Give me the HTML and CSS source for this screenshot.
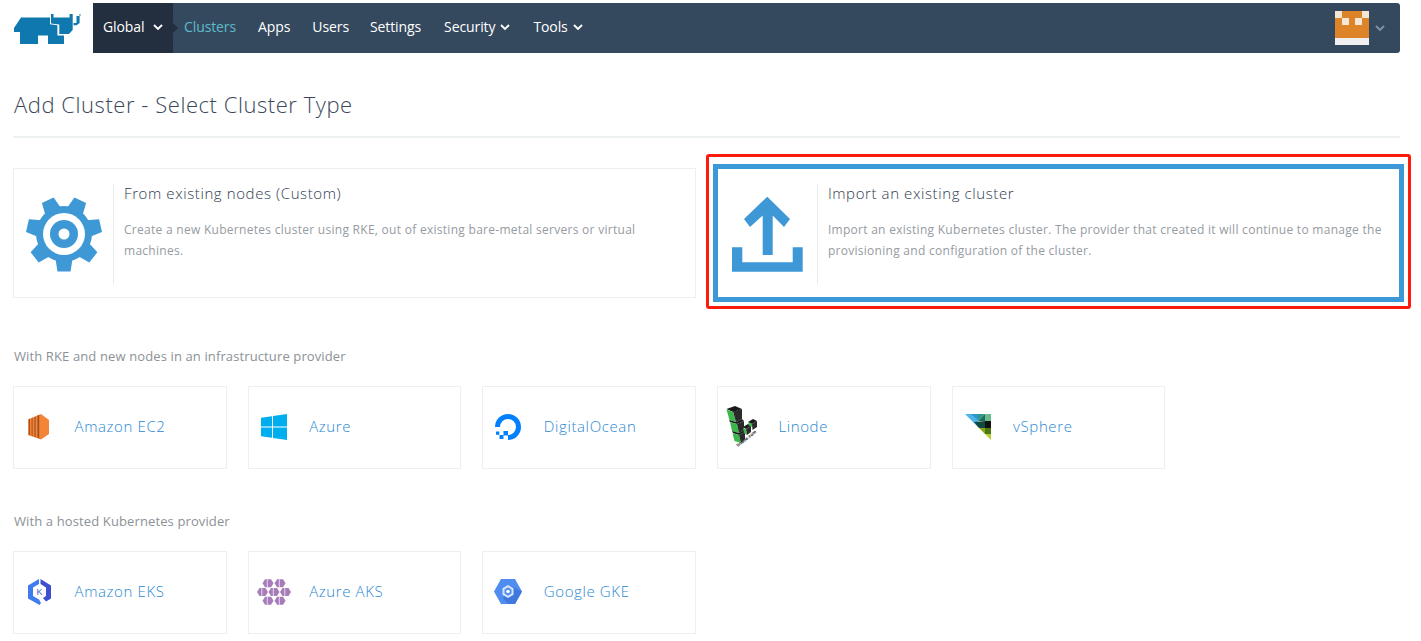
FILE: index.html
```html
<!DOCTYPE html>
<html lang="en">
<head>
<meta charset="utf-8">
<title>Add Cluster - Select Cluster Type</title>
<link rel="stylesheet" href="styles.css">
</head>
<body>
<header class="topbar">
  <a class="brand" href="#" aria-label="Rancher">
    <svg class="brand-logo" viewBox="14 13 68 32" width="68" height="32">
      <path class="logo-fill" d="M14 28 21 17.500H50V24.300L57.400 25.300V35.500H64V44H48V35.500H38V44H20V32H14Z"/>
      <path class="logo-fill" d="M51 14H53.500V17.500H69.600V14H72.700V30L69 34H59.300V24.500L51 23.500Z"/>
      <path class="logo-fill" d="M73.500 23H76.500V16H79.600V23L76.500 25.300H73.500Z"/>
      <circle class="logo-mark" cx="80" cy="15" r="1.200"/>
    </svg>
  </a>
  <nav class="nav">
    <a class="nav-scope" href="#">Global
      <svg class="chev chev-lg" viewBox="0 0 10 7"><path d="M1 1 5 5 9 1"/></svg>
    </a>
    <a class="nav-link nav-active link-clusters" href="#">Clusters</a>
    <a class="nav-link link-apps" href="#">Apps</a>
    <a class="nav-link link-users" href="#">Users</a>
    <a class="nav-link link-settings" href="#">Settings</a>
    <a class="nav-link link-security" href="#">Security
      <svg class="chev" viewBox="0 0 10 7"><path d="M1 1 5 5 9 1"/></svg>
    </a>
    <a class="nav-link link-tools" href="#">Tools
      <svg class="chev" viewBox="0 0 10 7"><path d="M1 1 5 5 9 1"/></svg>
    </a>
    <div class="account">
      <svg class="avatar" viewBox="0 0 5 5" width="34" height="34" shape-rendering="crispEdges">
        <rect class="av-o" width="5" height="4"/>
        <rect class="av-w" width="1" height="1"/>
        <rect class="av-w" x="4" width="1" height="1"/>
        <rect class="av-w" x="1" y="1" width="1" height="1"/>
        <rect class="av-w" x="3" y="1" width="1" height="1"/>
        <rect class="av-b" y="4" width="5" height="1"/>
      </svg>
      <svg class="chev chev-muted" viewBox="0 0 10 7"><path d="M1 1 5 5 9 1"/></svg>
    </div>
  </nav>
</header>

<main class="page">
  <h1 class="title">Add Cluster - Select Cluster Type</h1>

  <section class="grid grid-top">
    <a class="card" href="#">
      <span class="card-icon">
        <svg viewBox="-38 -38 76 76" width="76" height="76">
          <g class="blue">
            <circle r="28"/>
            <polygon points="-8.500,-25 -6.500,-37.500 6.500,-37.500 8.500,-25" transform="rotate(180)"/>
            <polygon points="-8.500,-25 -6.500,-37.500 6.500,-37.500 8.500,-25" transform="rotate(231.430)"/>
            <polygon points="-8.500,-25 -6.500,-37.500 6.500,-37.500 8.500,-25" transform="rotate(282.860)"/>
            <polygon points="-8.500,-25 -6.500,-37.500 6.500,-37.500 8.500,-25" transform="rotate(334.290)"/>
            <polygon points="-8.500,-25 -6.500,-37.500 6.500,-37.500 8.500,-25" transform="rotate(25.710)"/>
            <polygon points="-8.500,-25 -6.500,-37.500 6.500,-37.500 8.500,-25" transform="rotate(77.140)"/>
            <polygon points="-8.500,-25 -6.500,-37.500 6.500,-37.500 8.500,-25" transform="rotate(128.570)"/>
          </g>
          <circle class="white" r="21"/>
          <circle class="blue" r="14"/>
          <circle class="white" r="5.500"/>
        </svg>
      </span>
      <span class="card-body">
        <span class="card-title">From existing nodes (Custom)</span>
        <span class="card-desc">Create a new Kubernetes cluster using RKE, out of existing bare-metal servers or virtual machines.</span>
      </span>
    </a>

    <a class="card card-selected" href="#">
      <span class="card-icon">
        <svg viewBox="732 196 71 77" width="71" height="77">
          <path class="blue" d="M767.300 196.700 790 219 784 227 772.700 215.500V255H762.700V215.500L750 227 744 219Z"/>
          <path class="blue" d="M732 247.300H742.300V262.300H792.700V247.300H802.700V271.700H732Z"/>
        </svg>
      </span>
      <span class="card-body">
        <span class="card-title">Import an existing cluster</span>
        <span class="card-desc">Import an existing Kubernetes cluster. The provider that created it will continue to manage the provisioning and configuration of the cluster.</span>
      </span>
    </a>
  </section>

  <h2 class="section-label label-first">With RKE and new nodes in an infrastructure provider</h2>
  <section class="grid">
    <a class="tile" href="#">
      <span class="tile-icon">
        <svg viewBox="0 0 22 26" width="22" height="26">
          <polygon class="ec2-c" points="0,5.500 13,0 21,6 21,20 13,25.500 0,21"/>
          <polygon class="ec2-a" points="1,5 2,4.600 2,21.300 1,21"/>
          <polygon class="ec2-a" points="3.600,4 4.600,3.600 4.600,22.200 3.600,21.800"/>
          <polygon class="ec2-a" points="6.400,2.900 7.600,2.400 7.600,23.200 6.400,22.800"/>
          <polygon class="ec2-a" points="9.500,1.500 11.200,0.800 11.200,24.400 9.500,23.800"/>
        </svg>
      </span>
      <span class="tile-name">Amazon EC2</span>
    </a>
    <a class="tile" href="#">
      <span class="tile-icon">
        <svg viewBox="0 0 26 26" width="26" height="26">
          <path class="win" d="M0 3.700 11 2.200V12.500H0ZM12 2 26 0V12.500H12ZM0 13.500H11V23.800L0 22.300ZM12 13.500H26V26L12 24Z"/>
        </svg>
      </span>
      <span class="tile-name">Azure</span>
    </a>
    <a class="tile" href="#">
      <span class="tile-icon">
        <svg viewBox="0 0 26 26" width="26" height="26">
          <path class="do" d="M13 26V21A8 8 0 1 0 5 13H0A13 13 0 1 1 13 26Z"/>
          <rect class="do" x="8.500" y="17" width="4.500" height="4.500"/>
          <rect class="do" x="4.500" y="21" width="4" height="4"/>
          <rect class="do" x="1" y="17.500" width="3.300" height="3.300"/>
        </svg>
      </span>
      <span class="tile-name">DigitalOcean</span>
    </a>
    <a class="tile" href="#">
      <span class="tile-icon">
        <svg viewBox="0 0 34 41" width="34" height="41">
          <polygon class="li-k" points="0.500,3 9,0 16,3 7,6"/>
          <polygon class="li-g" points="0.500,3.500 7,6 10,16 3.500,14"/>
          <polygon class="li-d" points="7,5.500 16,3 16,13 10,16"/>
          <polygon class="li-k" points="3,14 10,16 16,13 18,15 11,18 4,16"/>
          <polygon class="li-g" points="4,16 11,18 13,27 6,25"/>
          <polygon class="li-d" points="11,18 18,15 18,24 13,27"/>
          <polygon class="li-k" points="6,25 13,27 18,24 19,26 13,29 7,27"/>
          <polygon class="li-g" points="6.500,27 13,29 15,37 8.500,35"/>
          <polygon class="li-d" points="13,29 19,26 19,33 15,37"/>
          <polygon class="li-k" points="17,21 22,18 25,20 20,23"/>
          <polygon class="li-g" points="17,21.500 20,23.500 21,29 18,27"/>
          <polygon class="li-d" points="20,23 25,20 25,26 21,29"/>
          <polygon class="li-k" points="22,16 27,13 31,15 26,18"/>
          <polygon class="li-g" points="22,16 26,18 26.500,21 23,19.500"/>
          <polygon class="li-d" points="26,18 31,15 31,21 26.500,24"/>
          <text class="li-text" transform="translate(12 41) rotate(-38)">linode.com</text>
        </svg>
      </span>
      <span class="tile-name">Linode</span>
    </a>
    <a class="tile" href="#">
      <span class="tile-icon">
        <svg viewBox="0 0 26 26" width="26" height="26">
          <polygon class="vs-1" points="0,0 13,0 13,13"/>
          <polygon class="vs-2" points="6,0 13,0 13,6"/>
          <polygon class="vs-3" points="13,0 20,0 13,7"/>
          <polygon class="vs-4" points="20,0 26,0 26,7 20,7"/>
          <polygon class="vs-5" points="13,7 20,0 20,7"/>
          <polygon class="vs-6" points="9,8 20,7 20,14 14,14"/>
          <polygon class="vs-7" points="20,7 26,7 26,14 20,14"/>
          <polygon class="vs-8" points="14,14 20,14 20,20"/>
          <polygon class="vs-9" points="20,14 26,14 26,20 20,20"/>
          <polygon class="vs-10" points="20,20 26,20 26,26"/>
        </svg>
      </span>
      <span class="tile-name">vSphere</span>
    </a>
  </section>

  <h2 class="section-label label-second">With a hosted Kubernetes provider</h2>
  <section class="grid">
    <a class="tile" href="#">
      <span class="tile-icon">
        <svg viewBox="0 0 23 26" width="23" height="26">
          <path class="eks-l" d="M11 0V5L5 8.500V17L11 20.500 13 24 11.500 26 0 19.500V6.500Z"/>
          <path class="eks-d" d="M12.500 0 23 6.500V19.500L18 22.500 15 19 18 17V8.500L12.500 5Z"/>
          <circle class="white" cx="11.500" cy="12.700" r="6.500"/>
          <text class="eks-k" x="11.500" y="16" text-anchor="middle">K</text>
        </svg>
      </span>
      <span class="tile-name">Amazon EKS</span>
    </a>
    <a class="tile" href="#">
      <span class="tile-icon">
        <svg viewBox="0 0 34 26" width="34" height="26">
          <defs>
            <g id="aks-cell">
              <path class="aks" d="M-5.500 0-3-4H3L5.500 0 3 4H-3Z"/>
              <rect class="aks-slit" x="-1.200" y="-4" width="1" height="8"/>
            </g>
          </defs>
          <use href="#aks-cell" x="11" y="4.200"/>
          <use href="#aks-cell" x="23" y="4.200"/>
          <use href="#aks-cell" x="5.500" y="13"/>
          <use href="#aks-cell" x="17" y="13"/>
          <use href="#aks-cell" x="28.500" y="13"/>
          <use href="#aks-cell" x="11" y="21.800"/>
          <use href="#aks-cell" x="23" y="21.800"/>
        </svg>
      </span>
      <span class="tile-name">Azure AKS</span>
    </a>
    <a class="tile" href="#">
      <span class="tile-icon">
        <svg viewBox="0 0 28 25" width="28" height="25">
          <polygon class="gke" points="7,0 21,0 28,12.500 21,25 7,25 0,12.500"/>
          <polygon class="gke-s" points="17,7 28,12.500 21,25 14,25 9,19"/>
          <polygon class="gke-r" points="14,6 19.500,9.200 19.500,15.800 14,19 8.500,15.800 8.500,9.200"/>
          <polygon class="gke" points="14,8.300 17.500,10.400 17.500,14.600 14,16.700 10.500,14.600 10.500,10.400"/>
          <circle class="white" cx="14" cy="12.500" r="1.800"/>
        </svg>
      </span>
      <span class="tile-name">Google GKE</span>
    </a>
  </section>
</main>
</body>
</html>
```

FILE: styles.css
```css
* { box-sizing: border-box; }
html, body { margin: 0; padding: 0; }
body {
  background: #fff;
  color: #3d4a5c;
  font-family: "Open Sans", "Liberation Sans", sans-serif;
  font-weight: 300;
  overflow: hidden;
}
a { text-decoration: none; color: inherit; }

.topbar {
  display: flex;
  padding: 3px 21px 0 14px;
  height: 53px;
}
.brand { width: 79px; padding-top: 10px; flex: none; }
.brand-logo { display: block; }
.logo-fill { fill: #0f78ae; }
.logo-mark { fill: #9cc4da; }

.nav {
  flex: 1;
  display: flex;
  align-items: center;
  height: 50px;
  background: #35495e;
  border-radius: 0 3px 3px 0;
  color: #fff;
  font-size: 14px;
  font-weight: 400;
  letter-spacing: -0.1px;
}
.nav-scope {
  position: relative;
  display: flex;
  align-items: center;
  width: 80px;
  height: 50px;
  padding: 0 0 4px 10px;
  background: #232f3e;
}
.nav-scope::after {
  content: "";
  position: absolute;
  right: -5px;
  top: 20px;
  border-left: 5px solid #232f3e;
  border-top: 5px solid transparent;
  border-bottom: 5px solid transparent;
}
.nav-link { display: flex; align-items: center; white-space: nowrap; padding-bottom: 4px; }
.nav-active { color: #5cbccb; }
.link-clusters { margin-left: 11px; }
.link-apps { margin-left: 22px; }
.link-users { margin-left: 22px; }
.link-settings { margin-left: 21px; }
.link-security { margin-left: 23px; }
.link-tools { margin-left: 23px; }

.chev { width: 10px; height: 7px; margin-left: 5px; margin-top: 2px; }
.chev path { fill: none; stroke: #fff; stroke-width: 1.800; }
.chev-lg { margin-left: 9px; }
.chev-muted { margin-left: 6px; margin-top: 0; }
.chev-muted path { stroke: #7f93a5; }

.account { margin-left: auto; margin-right: 15px; display: flex; align-items: center; }
.avatar { display: block; }
.av-o { fill: #dd8428; }
.av-w { fill: #f5e7d6; }
.av-b { fill: #f0f0f0; }

.page { padding: 0 21px 0 13px; }
.title {
  margin: 0;
  padding: 34px 0 15px 1px;
  font-size: 22px;
  line-height: 34px;
  font-weight: 300;
  letter-spacing: 0.55px;
  color: #3b4759;
  border-bottom: 2px solid #eef1f1;
}

.grid {
  display: grid;
  grid-template-columns: repeat(6, minmax(0, 1fr));
  column-gap: 1.5%;
}
.grid-top { margin-top: 30px; }

.card {
  position: relative;
  grid-column: span 3;
  display: flex;
  height: 130px;
  padding: 15px 0;
  border: 1px solid #edeff0;
}
.card-icon {
  flex: none;
  width: 100px;
  height: 100px;
  display: flex;
  align-items: center;
  justify-content: center;
  border-right: 1px solid #e9ebec;
}
.card-icon svg { display: block; }
.card-body { padding: 0 10px; display: flex; flex-direction: column; }
.card-title {
  font-size: 15px;
  line-height: 20px;
  font-weight: 300;
  letter-spacing: 0.6px;
  margin-top: -1px;
  color: #2f3b4d;
}
.card-desc {
  margin-top: 16px;
  font-size: 12px;
  line-height: 21px;
  font-weight: 400;
  letter-spacing: 0.28px;
  color: #969ba2;
}
.card-selected { outline: 5px solid #3d98d8; outline-offset: -1px; }
.card-selected::after {
  content: "";
  position: absolute;
  left: -12px;
  right: -12px;
  top: -15px;
  bottom: -12px;
  border: 3px solid #fe1a0c;
  border-radius: 3px;
}

.section-label {
  margin: 0;
  padding-left: 1px;
  font-size: 13px;
  line-height: 18px;
  font-weight: 400;
  letter-spacing: 0.12px;
  color: #8c9197;
}
.label-first { margin-top: 49px; margin-bottom: 21px; }
.label-second { margin-top: 43px; margin-bottom: 21px; }

.tile {
  display: flex;
  align-items: center;
  height: 83px;
  padding-bottom: 2px;
  border: 1px solid #edeff0;
}
.tile-icon {
  flex: none;
  width: 50px;
  display: flex;
  justify-content: center;
}
.tile-icon svg { display: block; }
.tile-name {
  margin-left: 10.5px;
  margin-top: -2px;
  font-size: 15px;
  font-weight: 300;
  letter-spacing: 0.62px;
  color: #2a88d2;
  white-space: nowrap;
}

.blue { fill: #3e98d5; }
.white { fill: #fff; }
.ec2-a { fill: #9d5025; }
.ec2-c { fill: #f58536; }
.win { fill: #00adef; }
.do { fill: #0080ff; }
.li-k { fill: #1a1a1a; }
.li-g { fill: #3cb54a; }
.li-d { fill: #2a2a2a; }
.li-text { font-size: 4.500px; font-family: "Liberation Sans", sans-serif; font-weight: 700; fill: #222; }
.vs-1 { fill: #4fb3e8; }
.vs-2 { fill: #2f93cf; }
.vs-3 { fill: #2d9a86; }
.vs-4 { fill: #6cbb8d; }
.vs-5 { fill: #1c6e64; }
.vs-6 { fill: #0e4a3e; }
.vs-7 { fill: #111; }
.vs-8 { fill: #8aa80f; }
.vs-9 { fill: #4d7a10; }
.vs-10 { fill: #b8cc2e; }
.eks-l { fill: #3e7cf0; }
.eks-d { fill: #3f4fd0; }
.eks-k { font-size: 9px; font-family: "Liberation Sans", sans-serif; fill: #4a56c8; }
.aks { fill: #a77cb9; }
.aks-slit { fill: #e6d9ec; }
.gke { fill: #4f8df0; }
.gke-s { fill: #4079dd; }
.gke-r { fill: #d8e6fb; }
```
